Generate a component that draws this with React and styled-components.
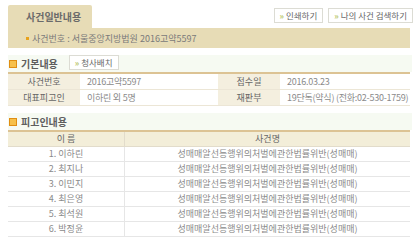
import React from "react";
import styled, { createGlobalStyle } from "styled-components";

const GlobalStyle = createGlobalStyle`
  body {
    margin: 0;
    background: #ffffff;
    font-family: "Noto Sans CJK KR", "Noto Sans", sans-serif;
    font-size: 9px;
    color: #777;
  }
`;

const accused = ["이하린", "최지나", "이민지", "최은영", "최석원", "박정윤"];
const caseName = "성매매알선등행위의처벌에관한법률위반(성매매)";

function LinkButton({ children }) {
  return (
    <SmallButton>
      <Arrow>»</Arrow> {children}
    </SmallButton>
  );
}

function SectionTitle({ title, children }) {
  return (
    <TitleRow>
      <Marker />
      <TitleText>{title}</TitleText>
      {children}
    </TitleRow>
  );
}

export default function App() {
  return (
    <Page>
      <GlobalStyle />
      <TopRow>
        <Tab>사건일반내용</Tab>
        <ButtonGroup>
          <LinkButton>인쇄하기</LinkButton>
          <LinkButton>나의 사건 검색하기</LinkButton>
        </ButtonGroup>
      </TopRow>
      <CaseBar>
        <Dot />
        사건번호 : 서울중앙지방법원 2016고약5597
      </CaseBar>

      <Section>
        <SectionTitle title="기본내용">
          <TitleButton>
            <LinkButton>청사배치</LinkButton>
          </TitleButton>
        </SectionTitle>
        <InfoTable>
          <InfoRow>
            <Label>사건번호</Label>
            <Value>2016고약5597</Value>
            <Label>접수일</Label>
            <Value>2016.03.23</Value>
          </InfoRow>
          <InfoRow>
            <Label>대표피고인</Label>
            <Value>이하린 외 5명</Value>
            <Label>재판부</Label>
            <Value>19단독(약식) (전화:02-530-1759)</Value>
          </InfoRow>
        </InfoTable>
      </Section>

      <Section>
        <SectionTitle title="피고인내용" />
        <ListTable>
          <HeadRow>
            <HeadCell>이 름</HeadCell>
            <HeadCell $divider>사건명</HeadCell>
          </HeadRow>
          {accused.map((name, i) => (
            <BodyRow key={name}>
              <Cell>
                {i + 1}. {name}
              </Cell>
              <Cell $divider>{caseName}</Cell>
            </BodyRow>
          ))}
        </ListTable>
      </Section>
    </Page>
  );
}

const Page = styled.div`
  width: 402px;
  padding: 5px 10px 0 8px;
`;

const TopRow = styled.div`
  display: flex;
  justify-content: space-between;
  align-items: flex-start;
`;

const Tab = styled.div`
  width: 84px;
  height: 23px;
  box-sizing: border-box;
  padding: 5px 0 0 18px;
  background: #e7dcb6;
  border-radius: 2px 2px 0 0;
  font-size: 10px;
  font-weight: bold;
  color: #6a6a6a;
  line-height: 13px;
`;

const ButtonGroup = styled.div`
  display: flex;
  gap: 5px;
  margin: 3px -3px 0 0;
`;

const SmallButton = styled.div`
  height: 15px;
  box-sizing: border-box;
  padding: 0 5px;
  border: 1px solid #dcdcd4;
  background: #fff;
  font-size: 8.5px;
  line-height: 13px;
  color: #666;
  white-space: nowrap;
`;

const Arrow = styled.span`
  color: #b8c66a;
  font-weight: bold;
`;

const CaseBar = styled.div`
  display: flex;
  align-items: center;
  gap: 3px;
  height: 20px;
  padding-left: 18px;
  background: #e7dcb6;
  font-size: 9px;
  color: #7a7a7a;
`;

const Dot = styled.span`
  width: 3px;
  height: 3px;
  background: #e8a21c;
`;

const Section = styled.div`
  margin-top: 7px;
`;

const TitleRow = styled.div`
  display: flex;
  align-items: center;
  height: 17px;
  background: #f6faf2;
  margin: 0 -2px 0 0;
`;

const Marker = styled.span`
  width: 6px;
  height: 6px;
  margin: 0 4px 0 1px;
  background: #f7c04a;
  border: 1px solid #e08e12;
`;

const TitleText = styled.span`
  font-size: 10px;
  font-weight: bold;
  color: #5e5e5e;
`;

const TitleButton = styled.div`
  margin-left: 11px;
  margin-top: -2px;
`;

const InfoTable = styled.div`
  border-top: 2px solid #dcc394;
`;

const InfoRow = styled.div`
  display: grid;
  grid-template-columns: 72px 138px 62px 1fr;
  height: 15px;
  border-bottom: 1px solid #ece6d6;
  line-height: 15px;
`;

const Label = styled.div`
  background: #f4efdf;
  text-align: center;
  color: #666;
`;

const Value = styled.div`
  padding-left: 7px;
  color: #8a8a8a;
  letter-spacing: -0.25px;
  white-space: nowrap;
`;

const ListTable = styled.div`
  border-top: 2px solid #dcc394;
`;

const HeadRow = styled.div`
  display: grid;
  grid-template-columns: 116px 1fr;
  height: 14px;
  background: #f3eed9;
  border-bottom: 1px solid #e2dccb;
  line-height: 14px;
`;

const HeadCell = styled.div`
  text-align: center;
  color: #666;
  border-left: ${(p) => (p.$divider ? "1px solid #e2dccb" : "none")};
`;

const BodyRow = styled.div`
  display: grid;
  grid-template-columns: 116px 1fr;
  height: 14px;
  border-bottom: 1px solid #e6e6e6;
  line-height: 14px;
`;

const Cell = styled.div`
  text-align: center;
  color: #8a8a8a;
  white-space: nowrap;
  border-left: ${(p) => (p.$divider ? "1px solid #e6e6e6" : "none")};
`;
